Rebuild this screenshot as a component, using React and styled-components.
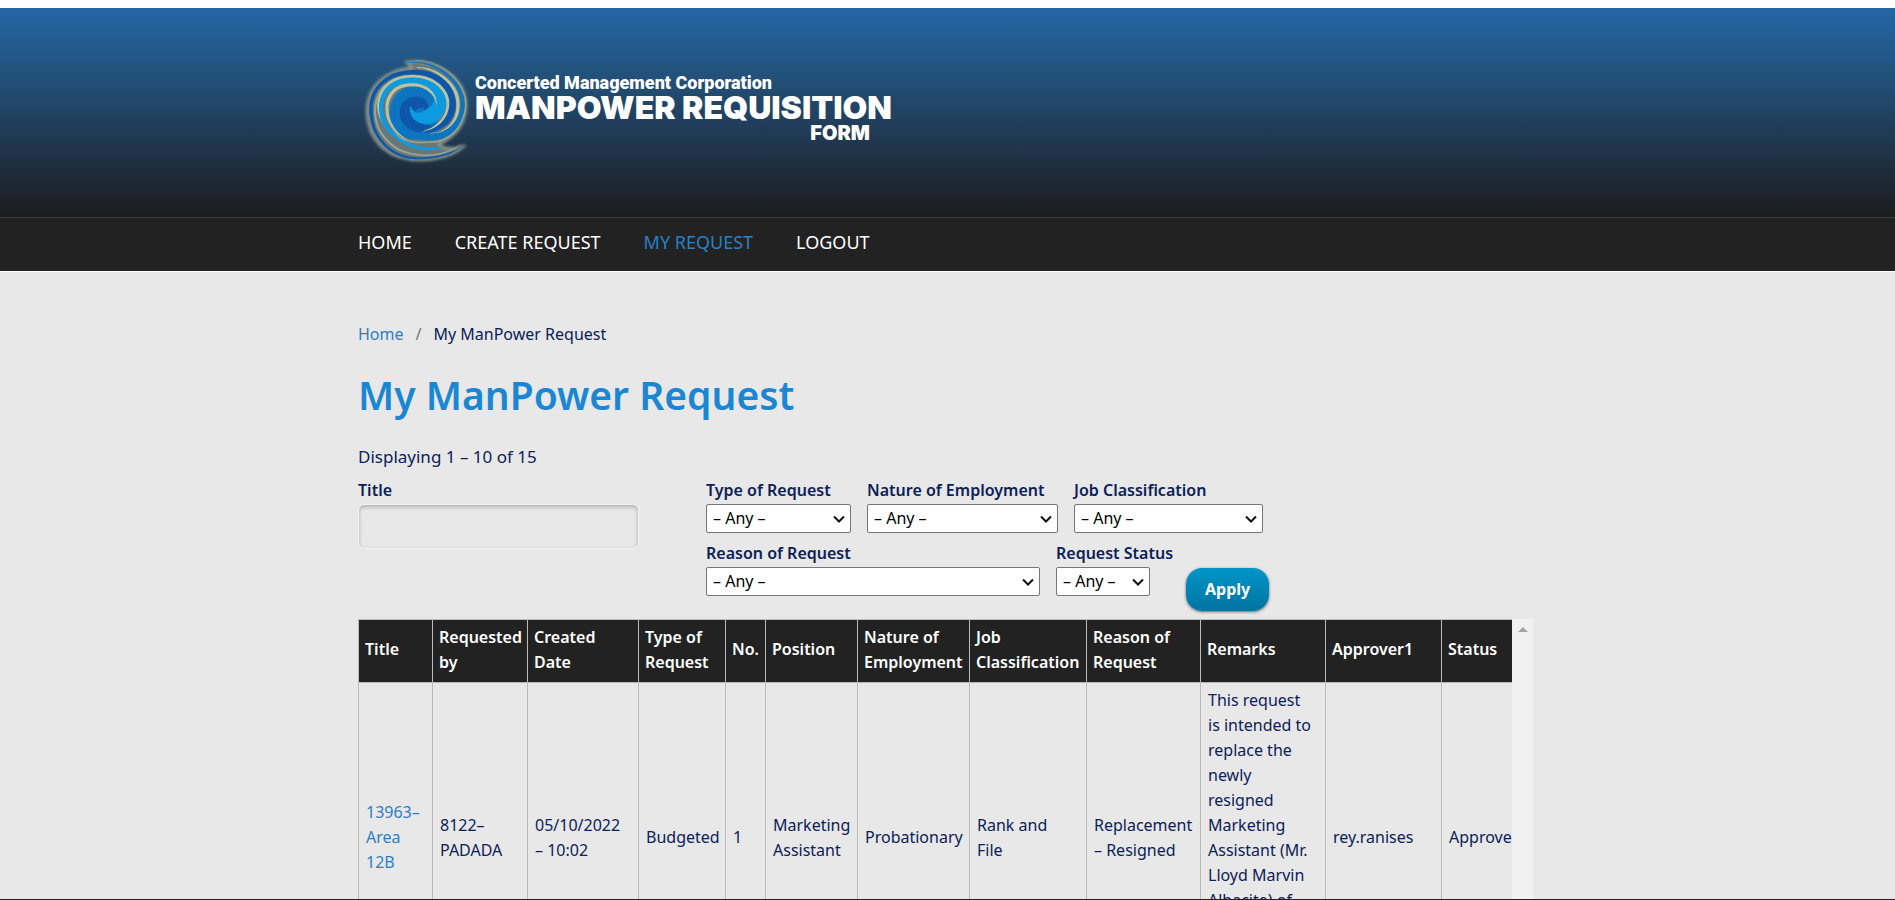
import styled, { createGlobalStyle } from 'styled-components'

const GlobalStyle = createGlobalStyle `
    * {
        box-sizing: border-box;
    }

    body {
        margin: 0;
        overflow: hidden;
        color: #0b2158;
        background-color: #fff;
        font-family: "Noto Sans", "Open Sans", sans-serif;
        font-size: 16px;
        line-height: 25px;
    }

    a {
        color: #2b80c5;
        text-decoration: none;
    }
`
const Page = styled.div `
    height: 100vh;
    padding-top: 8px;
    overflow: hidden;
    border-bottom: 1px solid #222;
`
const Container = styled.div `
    width: 100%;
    max-width: 1179px;
    margin: 0 auto;
`
const Header = styled.header `
    min-height: 209px;
    padding-top: 42px;
    background: linear-gradient(#2467a6, #225078 34%, #20354d 66%, #1c1c1c);
`
const Brand = styled(Container) `
    display: flex;
    color: #fff;
`
const Swirl = styled.svg `
    width: 117px;
    height: 120px;
    flex: none;
`
const BrandText = styled.div `
    display: flex;
    flex-direction: column;
    padding-top: 23px;
    font-family: Inter, sans-serif;
    font-weight: 900;
    white-space: nowrap;
`
const Company = styled.span `
    font-family: Roboto, sans-serif;
    font-size: 18px;
    line-height: 20px;
`
const AppName = styled.span `
    font-size: 32px;
    line-height: 30px;
`
const AppKind = styled.span `
    align-self: flex-end;
    padding-right: 22px;
    font-size: 20px;
    line-height: 20px;
`
const Nav = styled.nav `
    border-top: 1px solid #3f3d3c;
    border-bottom: 1px solid #fff;
    background-color: #222;
`
const Menu = styled(Container) `
    display: flex;
    gap: 43px;
    padding: 11px 0 15px;
`
const MenuLink = styled.a `
    color: ${({ $active }) => $active ? '#2b80c5' : '#fff'};
    font-size: 18px;
    line-height: 27px;
    text-transform: uppercase;
`
const Content = styled.main `
    min-height: 100vh;
    padding-top: 50px;
    background-color: #e8e8e8;
`
const Breadcrumb = styled.nav `
    display: flex;
    gap: 12px;
`
const Separator = styled.span `
    color: #777;
`
const Heading = styled.h1 `
    margin: 23px 0 24px;
    color: #1b87d2;
    font-size: 39px;
    font-weight: 600;
    line-height: 50px;
`
const Summary = styled.p `
    margin: 0 0 9px;
    font-size: 17px;
`
const Filters = styled.form `
    display: flex;
    gap: 67px;
    margin-bottom: 8px;
`
const FilterRows = styled.div `
    display: flex;
    flex-direction: column;
    gap: 8px;
`
const FilterRow = styled.div `
    display: flex;
    align-items: flex-start;
    gap: 16px;
`
const Field = styled.div `
    display: flex;
    flex-direction: column;
    width: ${({ $width }) => $width}px;
    white-space: nowrap;
`
const Label = styled.label `
    padding-bottom: 1px;
    font-weight: 600;
`
const TextInput = styled.input `
    width: 100%;
    height: 45px;
    padding: 0 12px;
    border: 1px solid #f3f3f3;
    border-radius: 6px;
    background-color: #e8e8e8;
    box-shadow: inset 0 2px 4px #b0b0b0;
    color: inherit;
    font: inherit;
`
const SelectBox = styled.div `
    display: grid;
    align-items: center;
    height: 29px;

    > * {
        grid-area: 1 / 1;
    }
`
const Select = styled.select `
    width: 100%;
    height: 100%;
    padding: 0 6px;
    border: 1px solid #767676;
    border-radius: 2px;
    appearance: none;
    background-color: #fff;
    color: #000;
    font: inherit;
    line-height: 25px;
`
const Chevron = styled.svg `
    width: 12px;
    height: 8px;
    margin-right: 6px;
    justify-self: end;
    pointer-events: none;
`
const ApplyButton = styled.button `
    height: 43px;
    margin: 27px 0 0 20px;
    padding: 0 19px;
    border: 0;
    border-radius: 16px;
    background: linear-gradient(#0095c8, #0074a0);
    box-shadow: 0 1px 3px #666;
    color: #fff;
    font: inherit;
    font-weight: 700;
    cursor: pointer;
`
const TableFrame = styled.div `
    display: flex;
    max-width: 1175px;
`
const TableScroll = styled.div `
    flex: 1;
    min-width: 0;
    overflow: hidden;
`
const ScrollTrack = styled.div `
    display: flex;
    justify-content: center;
    width: 21px;
    padding-top: 8px;
    background-color: #f1f1f1;
`
const ScrollArrow = styled.div `
    width: 0;
    height: 0;
    border: 5px solid transparent;
    border-top: 0;
    border-bottom-color: #a3a3a3;
`
const Table = styled.table `
    width: 1203px;
    table-layout: fixed;
    border-collapse: collapse;
`
const Column = styled.col `
    width: ${({ $width }) => $width}px;
`
const HeadCell = styled.th `
    height: 63px;
    padding: 4px 6px 7px;
    border: 1px solid #bbb;
    background-color: #222;
    color: #fff;
    font-weight: 600;
    text-align: left;
    white-space: pre-line;
`
const Cell = styled.td `
    height: 310px;
    padding: 5px 0 5px 7px;
    border: 1px solid #bbb;
    vertical-align: ${({ $top }) => $top ? 'top' : 'middle'};
    white-space: pre-line;
`

const menu = ['Home', 'Create Request', 'My Request', 'Logout']

const filters = [
    [
        { id: 'type', label: 'Type of Request', width: 145 },
        { id: 'nature', label: 'Nature of Employment', width: 191 },
        { id: 'classification', label: 'Job Classification', width: 189 },
    ],
    [
        { id: 'reason', label: 'Reason of Request', width: 334 },
        { id: 'status', label: 'Request Status', width: 94 },
    ],
]

const columns = [
    { key: 'title', label: 'Title', width: 74 },
    { key: 'requestedBy', label: 'Requested\nby', width: 95 },
    { key: 'created', label: 'Created\nDate', width: 111 },
    { key: 'type', label: 'Type of\nRequest', width: 87 },
    { key: 'count', label: 'No.', width: 40 },
    { key: 'position', label: 'Position', width: 92 },
    { key: 'nature', label: 'Nature of\nEmployment', width: 112 },
    { key: 'classification', label: 'Job\nClassification', width: 117 },
    { key: 'reason', label: 'Reason of\nRequest', width: 114 },
    { key: 'remarks', label: 'Remarks', width: 125 },
    { key: 'approver', label: 'Approver1', width: 116 },
    { key: 'status', label: 'Status', width: 120 },
]

const requests = [
    {
        title: '13963–\nArea\n12B',
        requestedBy: '8122–\nPADADA',
        created: '05/10/2022\n– 10:02',
        type: 'Budgeted',
        count: '1',
        position: 'Marketing\nAssistant',
        nature: 'Probationary',
        classification: 'Rank and\nFile',
        reason: 'Replacement\n– Resigned',
        remarks: 'This request\nis intended to\nreplace the\nnewly\nresigned\nMarketing\nAssistant (Mr.\nLloyd Marvin\nAlbacite) of',
        approver: 'rey.ranises',
        status: 'Approved',
    },
]

// each band is a run of [x, y, thickness] points, painted in this order
const bands = [
    { color: '#0b74c0', points: [[150, 37, 1], [190, 38, 3], [232, 48, 5], [280, 77, 8], [313, 120, 10], [323, 165, 12], [314, 210, 18], [285, 243, 24], [245, 257, 24], [200, 258, 24], [155, 243, 34], [128, 210, 36], [122, 175, 30]] },
    { color: '#98a590', points: [[318, 283, 1], [265, 309, 4], [195, 315, 5], [125, 295, 6], [75, 243, 6], [60, 180, 6], [76, 124, 6], [115, 91, 5], [165, 78, 4]] },
    { color: '#0a56a9', points: [[326, 289, 1], [285, 309, 4], [240, 321, 5], [190, 325, 6], [140, 317, 7], [95, 290, 7], [62, 245, 8], [49, 195, 10], [51, 150, 10], [70, 111, 10], [105, 82, 11], [145, 69, 12], [190, 67, 14], [232, 78, 17], [267, 103, 21], [288, 140, 22], [290, 178, 22], [274, 212, 20], [242, 234, 18], [208, 236, 24], [176, 224, 36], [158, 200, 44], [160, 175, 46], [178, 160, 40], [200, 160, 30], [213, 170, 14], [208, 180, 4]] },
    { color: '#b7c3a5', points: [[140, 276, 1], [100, 240, 5], [74, 195, 6], [71, 155, 7], [85, 119, 8], [112, 94, 9], [145, 82, 9], [185, 80, 9], [225, 89, 9], [257, 111, 9], [276, 142, 9], [277, 177, 8], [262, 209, 7], [235, 232, 5], [200, 246, 1]] },
    { color: '#0b9ade', points: [[264, 292, 1], [230, 297, 7], [195, 294, 9], [155, 280, 10], [115, 252, 12], [88, 217, 13], [79, 180, 13], [83, 145, 13], [101, 115, 14], [132, 97, 16], [170, 91, 17], [206, 96, 18], [236, 114, 24], [253, 143, 34], [250, 173, 42], [230, 195, 46], [203, 203, 36], [182, 198, 22], [170, 184, 11], [166, 170, 3]] },
    { color: '#b7c3a5', points: [[165, 276, 1], [127, 248, 5], [104, 215, 8], [96, 180, 9], [101, 146, 10], [122, 118, 10], [152, 106, 10], [190, 106, 9], [220, 119, 8], [239, 141, 5], [246, 166, 1]] },
    { color: '#b7c3a5', points: [[185, 52, 3], [222, 58, 5], [262, 79, 7], [294, 112, 9], [308, 150, 10], [306, 190, 9], [290, 221, 6], [262, 243, 3], [225, 251, 1]] },
    { color: '#98a590', points: [[108, 230, 3], [135, 262, 4], [170, 275, 5], [212, 277, 5], [265, 269, 5], [310, 232, 5], [332, 170, 4], [322, 117, 3], [285, 69, 3], [230, 38, 2], [180, 31, 1]] },
]

function smooth(points) {
    const result = []
    for (let i = 0; i < points.length - 1; i++) {
        const [a, b, c, d] = [points[i - 1] || points[i], points[i], points[i + 1], points[i + 2] || points[i + 1]]
        for (let step = 0; step < 8; step++) {
            const t = step / 8
            result.push(b.map((value, k) => (
                value + 0.5 * t * (c[k] - a[k] + t * (2 * a[k] - 5 * value + 4 * c[k] - d[k] + t * (3 * (value - c[k]) + d[k] - a[k])))
            )))
        }
    }
    result.push(points[points.length - 1])
    return result
}

function bandPath(points) {
    const line = smooth(points)
    const left = []
    const right = []
    line.forEach(([x, y, thickness], i) => {
        const before = line[i - 1] || line[i]
        const after = line[i + 1] || line[i]
        const dx = after[0] - before[0]
        const dy = after[1] - before[1]
        const scale = thickness / 2 / (Math.hypot(dx, dy) || 1)
        left.push(`${(x - dy * scale).toFixed(1)} ${(y + dx * scale).toFixed(1)}`)
        right.unshift(`${(x + dy * scale).toFixed(1)} ${(y - dx * scale).toFixed(1)}`)
    })
    return `M${left.concat(right).join('L')}Z`
}

function Logo() {
    const outline = 'M330 286C290 323 205 343 130 320C65 298 34 240 36 175C40 105 97 59 170 54L155 36C235 26 331 77 333 165C332 225 300 260 252 282C262 300 310 298 330 286Z'

    return (
        <Swirl viewBox="9 0 351 360" aria-hidden="true">
            <defs>
                <filter id="glow" x="-10%" y="-10%" width="120%" height="120%">
                    <feGaussianBlur stdDeviation="4" />
                </filter>
                <filter id="soften">
                    <feGaussianBlur stdDeviation="1" />
                </filter>
            </defs>
            <path d={outline} fill="#68777a" stroke="#8f9b8c" strokeWidth="8" filter="url(#glow)" />
            <g filter="url(#soften)">
                <ellipse cx="178" cy="188" rx="74" ry="80" fill="#0b74c0" />
                {bands.map((band, i) => <path key={i} d={bandPath(band.points)} fill={band.color} />)}
            </g>
        </Swirl>
    )
}

function App() {
    return (
        <>
            <GlobalStyle />
            <Page>
                <Header>
                    <Brand>
                        <Logo />
                        <BrandText>
                            <Company>Concerted Management Corporation</Company>
                            <AppName>MANPOWER REQUISITION</AppName>
                            <AppKind>FORM</AppKind>
                        </BrandText>
                    </Brand>
                </Header>
                <Nav>
                    <Menu>
                        {menu.map(item => (
                            <MenuLink key={item} href="#" $active={item === 'My Request'}>{item}</MenuLink>
                        ))}
                    </Menu>
                </Nav>
                <Content>
                    <Container>
                        <Breadcrumb aria-label="Breadcrumb">
                            <a href="#">Home</a>
                            <Separator>/</Separator>
                            <span>My ManPower Request</span>
                        </Breadcrumb>
                        <Heading>My ManPower Request</Heading>
                        <Summary>Displaying 1 – 10 of 15</Summary>
                        <Filters onSubmit={event => event.preventDefault()}>
                            <Field $width={281}>
                                <Label htmlFor="title">Title</Label>
                                <TextInput id="title" type="text" />
                            </Field>
                            <FilterRows>
                                {filters.map((row, i) => (
                                    <FilterRow key={i}>
                                        {row.map(({ id, label, width }) => (
                                            <Field key={id} $width={width}>
                                                <Label htmlFor={id}>{label}</Label>
                                                <SelectBox>
                                                    <Select id={id}>
                                                        <option>– Any –</option>
                                                    </Select>
                                                    <Chevron viewBox="0 0 12 8" fill="none" stroke="#111" strokeWidth="2" aria-hidden="true">
                                                        <path d="M1 1.5 6 6.5 11 1.5" />
                                                    </Chevron>
                                                </SelectBox>
                                            </Field>
                                        ))}
                                        {i === filters.length - 1 && <ApplyButton type="submit">Apply</ApplyButton>}
                                    </FilterRow>
                                ))}
                            </FilterRows>
                        </Filters>
                        <TableFrame>
                            <TableScroll>
                                <Table>
                                    <colgroup>
                                        {columns.map(({ key, width }) => <Column key={key} $width={width} />)}
                                    </colgroup>
                                    <thead>
                                        <tr>
                                            {columns.map(({ key, label }) => <HeadCell key={key} scope="col">{label}</HeadCell>)}
                                        </tr>
                                    </thead>
                                    <tbody>
                                        {requests.map(request => (
                                            <tr key={request.title}>
                                                {columns.map(({ key }) => (
                                                    <Cell key={key} $top={key === 'remarks'}>
                                                        {key === 'title' ? <a href="#">{request[key]}</a> : request[key]}
                                                    </Cell>
                                                ))}
                                            </tr>
                                        ))}
                                    </tbody>
                                </Table>
                            </TableScroll>
                            <ScrollTrack>
                                <ScrollArrow />
                            </ScrollTrack>
                        </TableFrame>
                    </Container>
                </Content>
            </Page>
        </>
    )
}

export default App
